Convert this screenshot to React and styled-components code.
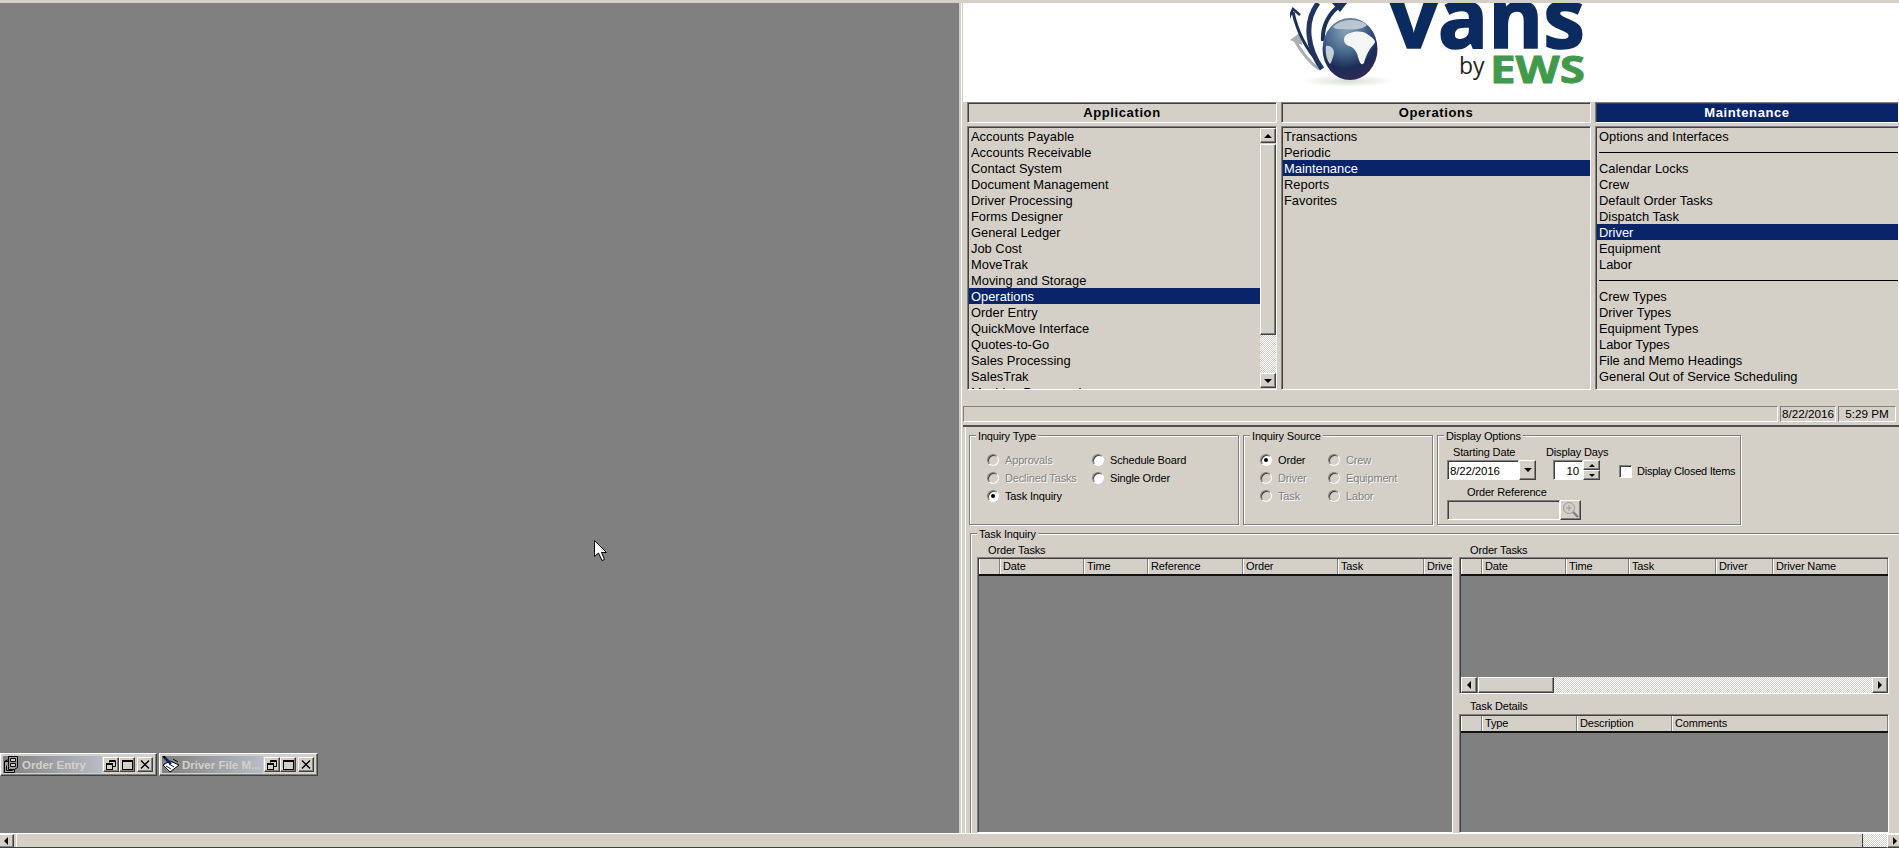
import styled, { createGlobalStyle } from "styled-components";

const FACE = "#d4d0c8";
const NAVY = "#0a246a";
const HATCH = "repeating-conic-gradient(#ffffff 0 25%, #d4d0c8 0 50%) 0 0 / 2px 2px";

const GlobalStyle = createGlobalStyle`
  html, body { margin: 0; padding: 0; background: ${FACE}; overflow: hidden; }
  body { font-family: "Liberation Sans", Arial, sans-serif; color: #000; }
  * { box-sizing: border-box; }
`;

const Screen = styled.div`
  position: relative;
  width: 1899px;
  height: 848px;
  display: flex;
  flex-direction: column;
  overflow: hidden;
  background: ${FACE};
`;

const TopStrip = styled.div`
  height: 3px;
  flex: none;
`;

const Main = styled.div`
  flex: 1;
  min-height: 0;
  display: flex;
`;

/* ---------- MDI desktop ---------- */
const MdiArea = styled.div`
  width: 959px;
  flex: none;
  background: #808080;
  display: flex;
  align-items: flex-end;
  gap: 2px;
  padding-bottom: 57px;
`;

const MinWindow = styled.div`
  width: ${(p) => p.$w}px;
  height: 23px;
  display: flex;
  align-items: center;
  padding: 0 3px 0 2px;
  background: ${FACE};
  border: 1px solid;
  border-color: #fff #404040 #404040 #fff;
  box-shadow: inset -1px -1px 0 #808080;
`;

const MinTitle = styled.div`
  flex: 1;
  min-width: 0;
  height: 17px;
  display: flex;
  align-items: center;
  gap: 2px;
  margin-right: 1px;
  background: linear-gradient(90deg, #808080, #b7bcc6);
  color: ${FACE};
  font-size: 11.5px;
  font-weight: 700;
  white-space: nowrap;
`;

const CaptionButton = styled.button`
  width: 16px;
  height: 15px;
  margin-left: ${(p) => p.$gap || 0}px;
  padding: 0;
  flex: none;
  display: flex;
  align-items: center;
  justify-content: center;
  background: ${FACE};
  border: 1px solid;
  border-color: #fff #404040 #404040 #fff;
  box-shadow: inset -1px -1px 0 #808080;
`;

/* ---------- right pane ---------- */
const RightPane = styled.div`
  flex: 1;
  min-width: 0;
  padding-left: 2px;
  display: flex;
`;

const RightInner = styled.div`
  flex: 1;
  min-width: 0;
  border-left: 1px solid #fff;
  padding-left: 1px;
  display: flex;
  flex-direction: column;
`;

const LogoBar = styled.div`
  height: 99px;
  flex: none;
  background: #fff;
  padding-left: 327px;
  overflow: hidden;
`;

const MenuRow = styled.div`
  display: grid;
  grid-template-columns: 310px 310px 1fr;
  column-gap: 4px;
  margin-left: 4px;
`;

const MenuHeader = styled.div`
  height: 21px;
  display: flex;
  align-items: center;
  justify-content: center;
  border: 1px solid;
  border-color: #808080 #fff #fff #808080;
  box-shadow: inset 1px 1px 0 #404040;
  font-size: 13px;
  font-weight: 700;
  letter-spacing: 0.6px;
  background: ${(p) => (p.$active ? NAVY : FACE)};
  color: ${(p) => (p.$active ? "#fff" : "#000")};
`;

const MenuList = styled.div`
  position: relative;
  height: 264px;
  margin-top: 3px;
  padding: 1px 0 0 1px;
  border: 1px solid;
  border-color: #808080 #fff #fff #808080;
  box-shadow: inset 1px 1px 0 #404040;
  display: flex;
  overflow: hidden;
`;

const MenuItems = styled.div`
  flex: 1;
  min-width: 0;
`;

const MenuItem = styled.div`
  height: 16px;
  line-height: 18px;
  padding-left: ${(p) => (p.$tight ? 1 : 2)}px;
  font-size: 12.9px;
  white-space: nowrap;
  background: ${(p) => (p.$selected ? NAVY : "transparent")};
  color: ${(p) => (p.$selected ? "#fff" : "#000")};
`;

const MenuSeparator = styled.div`
  height: 16px;
  display: flex;
  align-items: center;
  padding-left: 2px;
  &::after {
    content: "";
    flex: 1;
    height: 1px;
    background: #000;
  }
`;

/* scrollbars */
const ScrollButton = styled.div`
  width: ${(p) => p.$w || 16}px;
  height: ${(p) => p.$h || 15}px;
  flex: none;
  display: flex;
  align-items: center;
  justify-content: center;
  background: ${FACE};
  border: 1px solid;
  border-color: #fff #404040 #404040 #fff;
  box-shadow: inset -1px -1px 0 #808080;
`;

const VScroll = styled.div`
  width: 16px;
  flex: none;
  display: flex;
  flex-direction: column;
  height: 260px;
`;

const VThumb = styled(ScrollButton)`
  height: 191px;
  margin-top: 1px;
`;

const ScrollTrack = styled.div`
  flex: 1;
  background: ${HATCH};
`;

const HScroll = styled.div`
  height: 16px;
  flex: none;
  display: flex;
`;

const HThumb = styled(ScrollButton)`
  width: 76px;
  height: 16px;
  margin-left: 1px;
`;

const BottomScroll = styled.div`
  height: 15px;
  flex: none;
  display: flex;
  border-top: 1px solid #fff;
  border-bottom: 1px solid #404040;
  margin-left: -2px;
  margin-right: -4px;
`;

const BottomThumb = styled.div`
  flex: none;
  width: 1847px;
  margin-left: 2px;
  background: ${FACE};
  border-left: 1px solid #fff;
  border-right: 1px solid #404040;
`;

/* status bar */
const StatusBar = styled.div`
  display: flex;
  gap: 2px;
  height: 16px;
  margin-top: 16px;
  padding-right: 3px;
`;

const StatusCell = styled.div`
  flex: ${(p) => (p.$w ? "none" : 1)};
  width: ${(p) => p.$w || 0}px;
  border: 1px solid;
  border-color: #808080 #fff #fff #808080;
  font-size: 11.7px;
  line-height: 14px;
  text-align: center;
`;

const Divider = styled.div`
  height: 2px;
  flex: none;
  margin-top: 3px;
  background: #505050;
`;

/* ---------- lower pane ---------- */
const LowerPane = styled.div`
  flex: 1;
  min-height: 0;
  margin-left: 2px;
  border-left: 1px solid #fff;
  padding: 8px 0 0 3px;
  display: flex;
  flex-direction: column;
  font-size: 11px;
  letter-spacing: -0.15px;
`;

const GroupRow = styled.div`
  display: flex;
  gap: 4px;
  flex: none;
`;

const GroupBox = styled.div`
  position: relative;
  width: ${(p) => p.$w}px;
  height: 90px;
  border: 1px solid #808080;
  box-shadow: inset 1px 1px 0 #fff, 1px 1px 0 #fff;
`;

const Legend = styled.span`
  position: absolute;
  top: -7px;
  left: 6px;
  padding: 0 2px;
  line-height: 14px;
  background: ${FACE};
`;

const RadioGrid = styled.div`
  display: grid;
  grid-template-columns: ${(p) => p.$col}px 1fr;
  grid-auto-rows: 18px;
  padding: 15px 0 0 ${(p) => p.$left}px;
`;

const RadioOption = styled.label`
  display: flex;
  align-items: center;
  gap: 6px;
  color: ${(p) => (p.$disabled ? "#808080" : "#000")};
  text-shadow: ${(p) => (p.$disabled ? "1px 1px 0 #fff" : "none")};
`;

const RadioDot = styled.span`
  width: 12px;
  height: 12px;
  flex: none;
  border-radius: 50%;
  border: 1px solid;
  border-color: #808080 #fff #fff #808080;
  box-shadow: inset 1px 1px 0 #404040;
  background: ${(p) => (p.$disabled ? FACE : "#fff")};
  display: flex;
  align-items: center;
  justify-content: center;
  &::after {
    content: "";
    width: 4px;
    height: 4px;
    border-radius: 50%;
    background: ${(p) => (p.$checked ? "#000" : "transparent")};
  }
`;

const DisplayBody = styled.div`
  padding: 9px 0 0 9px;
`;

const DisplayTop = styled.div`
  display: flex;
`;

const FieldColumn = styled.div`
  width: ${(p) => p.$w}px;
  flex: none;
`;

const FieldCaption = styled.div`
  height: 15px;
  line-height: 14px;
  padding-left: ${(p) => p.$left || 0}px;
  margin-top: ${(p) => p.$top || 0}px;
  white-space: nowrap;
`;

const FieldRow = styled.div`
  display: flex;
  height: 20px;
  padding-left: ${(p) => p.$left || 0}px;
`;

const TextBox = styled.div`
  width: ${(p) => p.$w}px;
  height: 20px;
  line-height: 20px;
  padding: 0 3px 0 2px;
  text-align: ${(p) => (p.$right ? "right" : "left")};
  font-size: 11.5px;
  background: ${(p) => (p.$disabled ? FACE : "#fff")};
  border: 1px solid;
  border-color: #808080 #fff #fff #808080;
  box-shadow: inset 1px 1px 0 #404040;
`;

const SpinColumn = styled.div`
  display: flex;
  flex-direction: column;
`;

const ClosedItems = styled.label`
  display: flex;
  align-items: center;
  gap: 5px;
  height: 20px;
  margin: 16px 0 0 19px;
  white-space: nowrap;
  letter-spacing: -0.25px;
`;

const CheckBox = styled.span`
  width: 13px;
  height: 13px;
  background: #fff;
  border: 1px solid;
  border-color: #808080 #fff #fff #808080;
  box-shadow: inset 1px 1px 0 #404040;
`;

const TaskGroup = styled.div`
  position: relative;
  flex: 1;
  min-height: 0;
  margin: 8px 0 0 1px;
  padding: 9px 0 0 6px;
  border-top: 1px solid #808080;
  border-left: 1px solid #808080;
  box-shadow: inset 1px 1px 0 #fff;
  display: flex;
`;

const GridColumn = styled.div`
  width: ${(p) => p.$w}px;
  flex: none;
  display: flex;
  flex-direction: column;
  min-height: 0;
`;

const Splitter = styled.div`
  width: 6px;
  flex: none;
`;

const GridCaption = styled.div`
  height: ${(p) => (p.$top ? 15 : 14)}px;
  line-height: 14px;
  flex: none;
  padding-left: ${(p) => p.$left}px;
  margin-top: ${(p) => p.$top || 0}px;
`;

const Grid = styled.div`
  flex: ${(p) => (p.$h ? "none" : 1)};
  height: ${(p) => (p.$h ? `${p.$h}px` : "auto")};
  min-height: 0;
  display: flex;
  flex-direction: column;
  padding: 1px 0 0 1px;
  background: #808080;
  border: 1px solid;
  border-color: #808080 #fff #fff #808080;
  box-shadow: inset 1px 1px 0 #404040;
  overflow: hidden;
`;

const GridHeader = styled.div`
  display: flex;
  flex: none;
  height: 17px;
  background: ${FACE};
  border-bottom: 2px solid #111;
  overflow: hidden;
`;

const HeaderCell = styled.div`
  flex: ${(p) => (p.$w ? "none" : 1)};
  width: ${(p) => p.$w || 0}px;
  line-height: 15px;
  padding-left: 2px;
  white-space: nowrap;
  overflow: hidden;
  border-left: 1px solid #fff;
  border-right: 1px solid #808080;
`;

const GridBody = styled.div`
  flex: 1;
`;

/* ---------- drawings ---------- */
const Arrow = ({ dir, size = 4, color = "#000" }) => {
  const s = size;
  const points = {
    up: `0,${s} ${s},0 ${s * 2},${s}`,
    down: `0,0 ${s},${s} ${s * 2},0`,
    left: `${s},0 0,${s} ${s},${s * 2}`,
    right: `0,0 ${s},${s} 0,${s * 2}`,
  }[dir];
  const wide = dir === "up" || dir === "down";
  return (
    <svg width={wide ? s * 2 : s} height={wide ? s : s * 2}>
      <polygon points={points} fill={color} />
    </svg>
  );
};

const Logo = () => (
  <svg width="300" height="99" viewBox="0 0 300 99">
    <defs>
      <radialGradient id="globe" cx="0.42" cy="0.2" r="0.9">
        <stop offset="0" stopColor="#8aa2b8" />
        <stop offset="0.38" stopColor="#4a6c90" />
        <stop offset="0.68" stopColor="#1c2c58" />
        <stop offset="0.88" stopColor="#2f2a55" />
        <stop offset="1" stopColor="#6a4668" />
      </radialGradient>
      <radialGradient id="shade">
        <stop offset="0" stopColor="#d9ddd6" />
        <stop offset="1" stopColor="#ffffff" />
      </radialGradient>
    </defs>
    <ellipse cx="58" cy="78" rx="46" ry="6" fill="url(#shade)" />
    {/* swooshes behind the globe */}
    <path d="M29 66C20 60 12 50 4 36" fill="none" stroke="#a9aeb3" strokeWidth="3" />
    <path d="M0 37L11 29L12 42Z" fill="#a9aeb3" />
    <path d="M29 60C18 48 8 32 3 9" fill="none" stroke="#1c2f5a" strokeWidth="3" />
    <path d="M-1 15L3 6L10 12" fill="none" stroke="#1c2f5a" strokeWidth="2.5" />
    <path d="M32 66C18 46 13 20 28 0" fill="none" stroke="#22345f" strokeWidth="5" />
    <path d="M33 38C32 24 38 10 52 1" fill="none" stroke="#1c2f5a" strokeWidth="4" />
    <path d="M42 0L57 0L50 9Z" fill="#1c2f5a" />
    <ellipse cx="60" cy="46" rx="27.5" ry="31" fill="url(#globe)" />
    {/* continents */}
    <path d="M43 24C50 16 68 14 77 22C72 27 62 27 55 26C50 26 46 27 43 24Z" fill="#b9c6d1" />
    <path d="M55 33C60 28 72 27 77 31C82 34 87 38 84 41C80 45 76 52 74 60C71 63 70 60 68 54C67 48 63 44 59 43C54 41 53 37 55 33Z" fill="#f4f6f6" />
    <path d="M36 43C40 42 44 45 44 50C43 55 41 60 40 61C37 58 35 50 36 43Z" fill="#c4cfd7" />
    <text x="100" y="45" fontFamily="'Open Sans', sans-serif" fontWeight="700" fontSize="84" fill="#0b2a5f" stroke="#0b2a5f" strokeWidth="1.6" textLength="195" lengthAdjust="spacingAndGlyphs">vans</text>
    <text x="169" y="71" fontFamily="'Open Sans', sans-serif" fontWeight="400" fontSize="23" fill="#1f1f1f">by</text>
    <text x="200" y="80" fontFamily="'Open Sans', sans-serif" fontWeight="700" fontSize="37" fill="#41994c" stroke="#41994c" strokeWidth="0.8" textLength="95" lengthAdjust="spacingAndGlyphs">EWS</text>
  </svg>
);

const CabinetIcon = () => (
  <svg width="17" height="17" viewBox="0 0 17 17" fill="none" stroke="#000" style={{ flex: "none" }}>
    <path d="M5.5 .5H14.5V11.5L11.5 13.5V16.5H1.5V5.5L5.5 3.5Z" fill="#9c9c9c" />
    <path d="M7.5 2.5H12.5V5.5H7.5ZM7.5 7.5H12.5V10.5H7.5Z" fill="#d4d0c8" />
    <path d="M1.5 5.5H5.5V.5M5.5 5.5V13.5H11.5" />
    <path d="M3.5 9.5V14.5H9.5" />
  </svg>
);

const ClipboardIcon = () => (
  <svg width="18" height="17" viewBox="0 0 18 17" fill="none" style={{ flex: "none" }}>
    <path d="M1 9L8 5L17 9L8 16Z" fill="#fff" stroke="#000" />
    <path d="M4 10L9 13M7 8L12 11" stroke="#0a246a" />
    <path d="M2 1L9 8" stroke="#0a246a" strokeWidth="2.5" />
    <path d="M1 0L3 2" stroke="#000" strokeWidth="2" />
    <path d="M11 3L16 6" stroke="#000" />
  </svg>
);

const RestoreGlyph = () => (
  <svg width="10" height="10" viewBox="0 0 10 10" fill="none" stroke="#000">
    <path d="M3.5 2.5V.5H9.5V6.5H6.5" />
    <path d="M3 1.5H9" />
    <rect x=".5" y="3.5" width="6" height="6" />
    <path d="M0 4.5H7" />
  </svg>
);

const MaxGlyph = () => (
  <svg width="11" height="10" viewBox="0 0 11 10" fill="none" stroke="#000">
    <rect x=".5" y=".5" width="10" height="9" />
    <path d="M0 1.5H11" />
  </svg>
);

const CloseGlyph = () => (
  <svg width="10" height="9" viewBox="0 0 10 9" fill="none" stroke="#000" strokeWidth="1.4">
    <path d="M1 .5L9 8.5M9 .5L1 8.5" />
  </svg>
);

const Magnifier = () => (
  <svg width="18" height="18" viewBox="0 0 18 18" fill="none" stroke="#9a9a96">
    <circle cx="7" cy="7" r="5.5" />
    <path d="M7 4V10M4 7H10" />
    <path d="M11 11L16 16" strokeWidth="2.4" stroke="#808080" />
  </svg>
);

const CursorLayer = styled.svg`
  position: absolute;
  left: 593px;
  top: 539px;
  pointer-events: none;
`;

const Cursor = () => (
  <CursorLayer width="15" height="24" viewBox="0 0 15 24">
    <path d="M1.5 1.5V17.5L5.5 14L9 21.5L11.5 20.5L8.5 13.5H13.5Z" fill="#fff" stroke="#000" />
  </CursorLayer>
);

/* ---------- data ---------- */
const applicationItems = [
  "Accounts Payable", "Accounts Receivable", "Contact System", "Document Management",
  "Driver Processing", "Forms Designer", "General Ledger", "Job Cost", "MoveTrak",
  "Moving and Storage", "Operations", "Order Entry", "QuickMove Interface", "Quotes-to-Go",
  "Sales Processing", "SalesTrak", "Machine Personnel",
];
const operationItems = ["Transactions", "Periodic", "Maintenance", "Reports", "Favorites"];
const maintenanceItems = [
  "Options and Interfaces", null, "Calendar Locks", "Crew", "Default Order Tasks", "Dispatch Task",
  "Driver", "Equipment", "Labor", null, "Crew Types", "Driver Types", "Equipment Types",
  "Labor Types", "File and Memo Headings", "General Out of Service Scheduling",
];

const orderColumns = [["", 21], ["Date", 84], ["Time", 64], ["Reference", 95], ["Order", 95], ["Task", 86], ["Driver", 60]];
const rightColumns = [["", 21], ["Date", 84], ["Time", 63], ["Task", 87], ["Driver", 57], ["Driver Name", 0]];
const detailColumns = [["", 21], ["Type", 95], ["Description", 95], ["Comments", 0]];

const MenuColumn = ({ title, items, selected, active, tight, children }) => (
  <div>
    <MenuHeader $active={active}>{title}</MenuHeader>
    <MenuList>
      <MenuItems>
        {items.map((item, i) =>
          item === null ? (
            <MenuSeparator key={i} />
          ) : (
            <MenuItem key={i} $tight={tight} $selected={item === selected}>{item}</MenuItem>
          )
        )}
      </MenuItems>
      {children}
    </MenuList>
  </div>
);

const Radio = ({ label, checked, disabled }) => (
  <RadioOption $disabled={disabled}>
    <RadioDot $checked={checked} $disabled={disabled} />
    {label}
  </RadioOption>
);

const DataGrid = ({ columns, h, children }) => (
  <Grid $h={h}>
    <GridHeader>
      {columns.map(([name, w], i) => (
        <HeaderCell key={i} $w={w}>{name}</HeaderCell>
      ))}
    </GridHeader>
    <GridBody />
    {children}
  </Grid>
);

const MinimizedWindow = ({ width, icon, title }) => (
  <MinWindow $w={width}>
    <MinTitle>{icon}{title}</MinTitle>
    <CaptionButton><RestoreGlyph /></CaptionButton>
    <CaptionButton><MaxGlyph /></CaptionButton>
    <CaptionButton $gap={2}><CloseGlyph /></CaptionButton>
  </MinWindow>
);

export default function App() {
  return (
    <Screen>
      <GlobalStyle />
      <TopStrip />
      <Main>
        <MdiArea>
          <MinimizedWindow width={157} icon={<CabinetIcon />} title="Order Entry" />
          <MinimizedWindow width={159} icon={<ClipboardIcon />} title="Driver File M..." />
        </MdiArea>
        <RightPane>
          <RightInner>
            <LogoBar><Logo /></LogoBar>
            <MenuRow>
              <MenuColumn title="Application" items={applicationItems} selected="Operations">
                <VScroll>
                  <ScrollButton><Arrow dir="up" /></ScrollButton>
                  <VThumb />
                  <ScrollTrack />
                  <ScrollButton><Arrow dir="down" /></ScrollButton>
                </VScroll>
              </MenuColumn>
              <MenuColumn title="Operations" items={operationItems} selected="Maintenance" tight />
              <MenuColumn title="Maintenance" items={maintenanceItems} selected="Driver" active />
            </MenuRow>
            <StatusBar>
              <StatusCell />
              <StatusCell $w={56}>8/22/2016</StatusCell>
              <StatusCell $w={58}>5:29 PM</StatusCell>
            </StatusBar>
            <Divider />
            <LowerPane>
              <GroupRow>
                <GroupBox $w={270}>
                  <Legend>Inquiry Type</Legend>
                  <RadioGrid $col={105} $left={17}>
                    <Radio label="Approvals" disabled />
                    <Radio label="Schedule Board" />
                    <Radio label="Declined Tasks" disabled />
                    <Radio label="Single Order" />
                    <Radio label="Task Inquiry" checked />
                  </RadioGrid>
                </GroupBox>
                <GroupBox $w={190}>
                  <Legend>Inquiry Source</Legend>
                  <RadioGrid $col={68} $left={16}>
                    <Radio label="Order" checked />
                    <Radio label="Crew" disabled />
                    <Radio label="Driver" disabled />
                    <Radio label="Equipment" disabled />
                    <Radio label="Task" disabled />
                    <Radio label="Labor" disabled />
                  </RadioGrid>
                </GroupBox>
                <GroupBox $w={304}>
                  <Legend>Display Options</Legend>
                  <DisplayBody>
                    <DisplayTop>
                      <FieldColumn $w={99}>
                        <FieldCaption $left={6}>Starting Date</FieldCaption>
                        <FieldRow>
                          <TextBox $w={72}>8/22/2016</TextBox>
                          <ScrollButton $w={17} $h={20}><Arrow dir="down" /></ScrollButton>
                        </FieldRow>
                      </FieldColumn>
                      <FieldColumn $w={54}>
                        <FieldCaption>Display Days</FieldCaption>
                        <FieldRow $left={7}>
                          <TextBox $w={30} $right>10</TextBox>
                          <SpinColumn>
                            <ScrollButton $w={17} $h={10}><Arrow dir="up" size={3} /></ScrollButton>
                            <ScrollButton $w={17} $h={10}><Arrow dir="down" size={3} /></ScrollButton>
                          </SpinColumn>
                        </FieldRow>
                      </FieldColumn>
                      <ClosedItems><CheckBox />Display Closed Items</ClosedItems>
                    </DisplayTop>
                    <FieldCaption $left={20} $top={4}>Order Reference</FieldCaption>
                    <FieldRow>
                      <TextBox $w={113} $disabled />
                      <ScrollButton $w={21} $h={20}><Magnifier /></ScrollButton>
                    </FieldRow>
                  </DisplayBody>
                </GroupBox>
              </GroupRow>
              <TaskGroup>
                <Legend>Task Inquiry</Legend>
                <GridColumn $w={476}>
                  <GridCaption $left={11}>Order Tasks</GridCaption>
                  <DataGrid columns={orderColumns} />
                </GridColumn>
                <Splitter />
                <GridColumn $w={430}>
                  <GridCaption $left={11}>Order Tasks</GridCaption>
                  <DataGrid columns={rightColumns} h={137}>
                    <HScroll>
                      <ScrollButton $h={16}><Arrow dir="left" /></ScrollButton>
                      <HThumb />
                      <ScrollTrack />
                      <ScrollButton $h={16}><Arrow dir="right" /></ScrollButton>
                    </HScroll>
                  </DataGrid>
                  <GridCaption $left={11} $top={5}>Task Details</GridCaption>
                  <DataGrid columns={detailColumns} />
                </GridColumn>
              </TaskGroup>
            </LowerPane>
          </RightInner>
        </RightPane>
      </Main>
      <BottomScroll>
        <ScrollButton $h={14}><Arrow dir="left" /></ScrollButton>
        <BottomThumb />
        <ScrollTrack />
        <ScrollButton $h={14}><Arrow dir="right" /></ScrollButton>
      </BottomScroll>
      <Cursor />
    </Screen>
  );
}
